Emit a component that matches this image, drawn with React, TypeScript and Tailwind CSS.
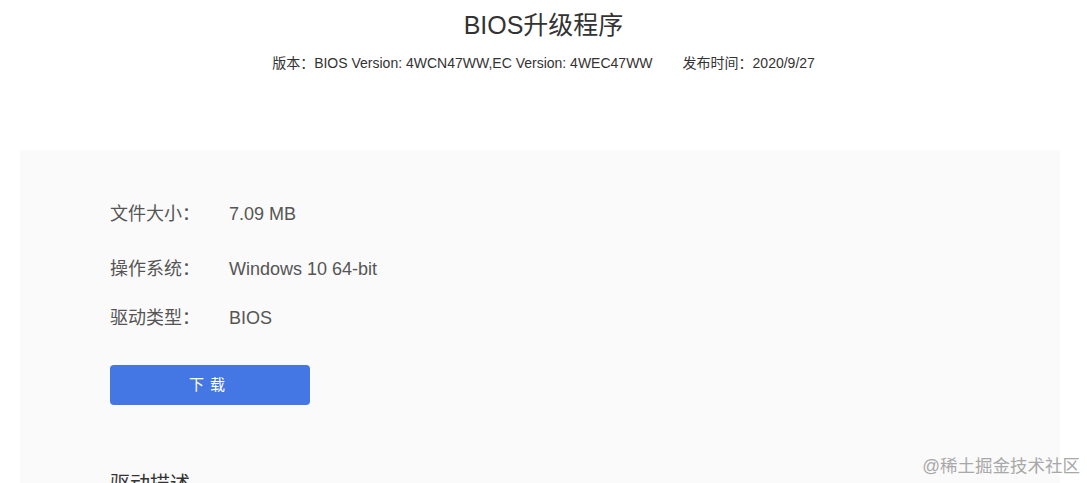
import React from "react";

export default function App() {
  const rows = [
    { k: "文件大小：", v: "7.09 MB", h: "h-[56px]" },
    { k: "操作系统：", v: "Windows 10 64-bit", h: "h-[54px]" },
    { k: "驱动类型：", v: "BIOS", h: "h-[44px]" },
  ];
  return (
    <div
      className="relative w-[1087px] h-[483px] overflow-hidden bg-white text-[#333]"
      style={{ fontFamily: '"Liberation Sans", Arial, "Noto Sans CJK SC", sans-serif' }}
    >
      <div className="flex flex-col items-center">
        <h1 className="mt-[8px] text-[25px] leading-[34px] text-[#333]">BIOS升级程序</h1>
        <div className="mt-[13px] flex gap-[30px] text-[14px] leading-[17px] text-[#333]">
          <span>版本：BIOS Version: 4WCN47WW,EC Version: 4WEC47WW</span>
          <span>发布时间：2020/9/27</span>
        </div>
      </div>
      <div className="mx-[20px] mt-[78px] w-[1040px] h-[400px] bg-[#fafafa] pl-[90px] pt-[36px]">
        <div className="flex flex-col">
          {rows.map((r) => (
            <div key={r.k} className={`flex items-center ${r.h} text-[18px] text-[#555]`}>
              <span className="w-[119px]">{r.k}</span>
              <span>{r.v}</span>
            </div>
          ))}
        </div>
        <button className="mt-[25px] flex h-[40px] w-[200px] items-center justify-center rounded-[4px] bg-[#4477e3] text-[15px] tracking-[6px] text-white">
          下载
        </button>
        <div className="mt-[66px] text-[20px] leading-[26px] text-[#333]">驱动描述</div>
      </div>
      <div className="absolute right-[7px] top-[455px] text-[17.5px] leading-[22px] text-[#a8a8a8]">
        @稀土掘金技术社区
      </div>
    </div>
  );
}
